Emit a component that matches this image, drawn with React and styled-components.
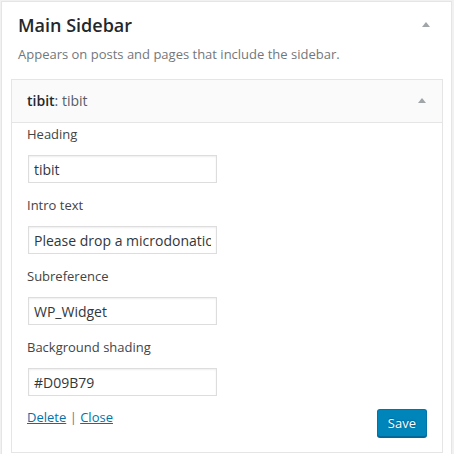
import styled, { createGlobalStyle } from "styled-components";

const GlobalStyle = createGlobalStyle`
  html, body {
    margin: 0;
    padding: 0;
    background: #f1f1f1;
    font-family: "Open Sans", "Liberation Sans", sans-serif;
    color: #444;
  }
  * { box-sizing: border-box; }
`;

const SidebarBox = styled.section`
  width: 451px;
  margin: 1px 0 0 1px;
  padding: 0 8px 0 9px;
  background: #fff;
  border: 1px solid #e5e5e5;
  border-bottom: none;
  height: 453px;
  overflow: hidden;
`;

const SidebarHead = styled.div`
  display: flex;
  align-items: flex-start;
  justify-content: space-between;
  padding: 11px 13px 0 7px;
`;

const SidebarTitle = styled.h2`
  margin: 0;
  font-size: 18px;
  line-height: 24px;
  font-weight: 600;
  color: #23282d;
`;

const Arrow = styled.span`
  display: block;
  width: 0;
  height: 0;
  margin-top: ${(p) => p.$top || 0}px;
  border-left: 4px solid transparent;
  border-right: 4px solid transparent;
  border-bottom: 5px solid #a0a5aa;
`;

const Description = styled.p`
  margin: 8px 0 0 7px;
  font-size: 13px;
  line-height: 18px;
  color: #72777c;
`;

const Widget = styled.div`
  margin-top: 16px;
  border: 1px solid #e5e5e5;
  background: #fff;
`;

const WidgetTop = styled.div`
  display: flex;
  align-items: center;
  justify-content: space-between;
  height: 43px;
  padding: 0 16px 0 15px;
  background: #fafafa;
  border-bottom: 1px solid #e5e5e5;
`;

const WidgetTitle = styled.h3`
  margin: 0;
  font-size: 14px;
  line-height: 18px;
  font-weight: 600;
  color: #23282d;

  span {
    font-weight: 400;
    color: #555d66;
  }
`;

const WidgetInside = styled.div`
  padding: 2px 15px 15px;
`;

const Field = styled.div`
  display: flex;
  flex-direction: column;
  align-items: flex-start;
  margin-bottom: 13px;
`;

const Label = styled.label`
  font-size: 13px;
  line-height: 18px;
  color: #444;
`;

const Input = styled.input`
  width: 189px;
  height: 28px;
  margin: 12px 1px 0;
  padding: 0 5px;
  border: 1px solid #ddd;
  box-shadow: inset 0 1px 2px rgba(0, 0, 0, 0.07);
  background: #fff;
  font-family: "Open Sans", "Liberation Sans", sans-serif;
  font-size: 14px;
  color: #32373c;
  outline: none;
`;

const Controls = styled.div`
  display: flex;
  align-items: flex-start;
  justify-content: space-between;
`;

const Links = styled.div`
  font-size: 13px;
  line-height: 16px;
  color: #72777c;
  margin-top: 0;

  a {
    color: #0073aa;
    text-decoration: underline;
  }
`;

const SaveButton = styled.button`
  height: 28px;
  padding: 0 10px 1px;
  border: 1px solid #0073aa;
  border-bottom-color: #006799;
  border-radius: 3px;
  background: #0085ba;
  box-shadow: 0 1px 0 #006799;
  color: #fff;
  font-family: "Open Sans", "Liberation Sans", sans-serif;
  font-size: 13px;
  line-height: 26px;
  text-shadow: 0 -1px 1px #006799, 1px 0 1px #006799;
  cursor: pointer;
`;

const fields = [
  { label: "Heading", value: "tibit" },
  { label: "Intro text", value: "Please drop a microdonation" },
  { label: "Subreference", value: "WP_Widget" },
  { label: "Background shading", value: "#D09B79" },
];

export default function App() {
  return (
    <>
      <GlobalStyle />
      <SidebarBox>
        <SidebarHead>
          <SidebarTitle>Main Sidebar</SidebarTitle>
          <Arrow $top={9} />
        </SidebarHead>
        <Description>Appears on posts and pages that include the sidebar.</Description>
        <Widget>
          <WidgetTop>
            <WidgetTitle>
              tibit<span>: tibit</span>
            </WidgetTitle>
            <Arrow $top={-2} />
          </WidgetTop>
          <WidgetInside>
            {fields.map((f) => (
              <Field key={f.label}>
                <Label>{f.label}</Label>
                <Input defaultValue={f.value} />
              </Field>
            ))}
            <Controls>
              <Links>
                <a href="#delete">Delete</a> | <a href="#close">Close</a>
              </Links>
              <SaveButton>Save</SaveButton>
            </Controls>
          </WidgetInside>
        </Widget>
      </SidebarBox>
    </>
  );
}
